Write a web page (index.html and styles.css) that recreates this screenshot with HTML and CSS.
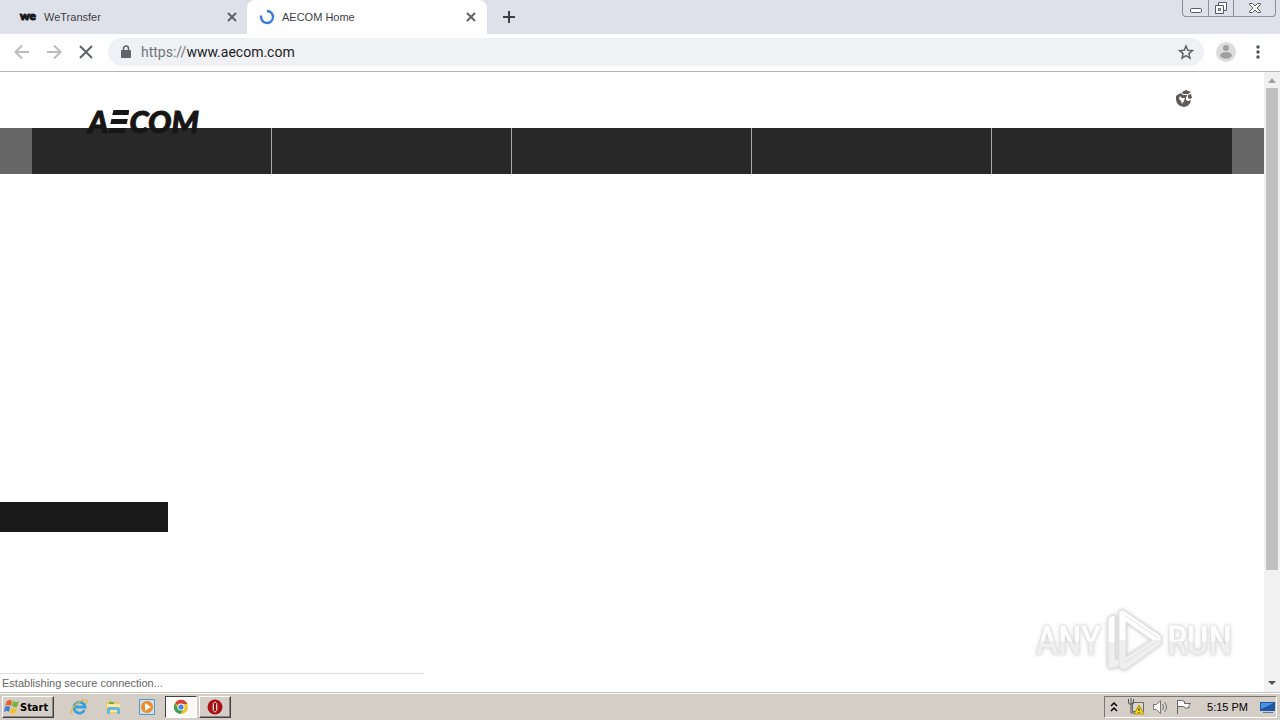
FILE: index.html
```html
<!DOCTYPE html>
<html lang="en">
<head>
<meta charset="utf-8">
<title>AECOM Home</title>
<link rel="stylesheet" href="styles.css">
</head>
<body>
<div class="tabstrip">
  <div class="tab">
    <span class="we" aria-hidden="true">we</span>
    <span class="tab-title">WeTransfer</span>
    <button class="icon-btn" aria-label="Close WeTransfer"><svg width="10" height="10" viewBox="0 0 10 10"><path d="M1 1l8 8M9 1l-8 8" stroke="#5f6368" stroke-width="2"/></svg></button>
  </div>
  <div class="tab active">
    <svg class="spinner" width="16" height="16" viewBox="0 0 16 16"><path d="M8 2a6 6 0 1 1-5.8 4.500" fill="none" stroke="#3b7ddd" stroke-width="2.400"/></svg>
    <span class="tab-title">AECOM Home</span>
    <button class="icon-btn" aria-label="Close AECOM Home"><svg width="10" height="10" viewBox="0 0 10 10"><path d="M1 1l8 8M9 1l-8 8" stroke="#5f6368" stroke-width="2"/></svg></button>
  </div>
  <button class="icon-btn new-tab" aria-label="New tab"><svg width="12" height="12" viewBox="0 0 12 12"><path d="M6 0v12M0 6h12" stroke="#3c4043" stroke-width="2"/></svg></button>
  <div class="window-controls">
    <button class="win" aria-label="Minimize"><svg width="24" height="16" viewBox="0 0 24 16"><rect x="6.500" y="8.500" width="11" height="4" rx="1" fill="#fff" stroke="#555b66"/></svg></button>
    <button class="win" aria-label="Restore"><svg width="24" height="16" viewBox="0 0 24 16"><path d="M9.500 2.500h8v8h-8z" fill="#fff" stroke="#555b66"/><path d="M6.500 5.500h8v8h-8z" fill="#fff" stroke="#555b66"/><path d="M9.500 8.500h2v2h-2z" fill="none" stroke="#555b66"/></svg></button>
    <button class="win wide" aria-label="Close"><svg width="24" height="16" viewBox="0 0 24 16"><path d="M6.500 3.500h3l2.500 2.500 2.500-2.500h3v1l-3.500 3.500 3.500 3.500v1h-3L12 10l-2.500 2.500h-3v-1L10 8 6.500 4.500z" fill="#fff" stroke="#555b66"/></svg></button>
  </div>
</div>
<div class="toolbar">
  <button class="icon-btn" aria-label="Back"><svg width="16" height="16" viewBox="0 0 16 16"><path d="M15 8H2M8 1.500L1.500 8 8 14.500" fill="none" stroke="#b8babd" stroke-width="2"/></svg></button>
  <button class="icon-btn" aria-label="Forward"><svg width="16" height="16" viewBox="0 0 16 16"><path d="M1 8h13M8 1.500L14.500 8 8 14.500" fill="none" stroke="#b8babd" stroke-width="2"/></svg></button>
  <button class="icon-btn" aria-label="Stop"><svg width="16" height="16" viewBox="0 0 16 16"><path d="M2 2l12 12M14 2L2 14" stroke="#5f6368" stroke-width="2"/></svg></button>
  <div class="omnibox">
    <svg width="10" height="14" viewBox="0 0 10 14"><path d="M1 5h8q1 0 1 1v6q0 1-1 1H1q-1 0-1-1V6q0-1 1-1z" fill="#5f6368"/><path d="M2.500 6V3.500a2.500 2.500 0 0 1 5 0V6" fill="none" stroke="#5f6368" stroke-width="1.500"/></svg>
    <a class="url" href="#"><span class="scheme">https://</span>www.aecom.com</a>
    <button class="icon-btn" aria-label="Bookmark"><svg width="16" height="16" viewBox="0 0 16 16"><path d="M8 2l1.800 4.200 4.600.4-3.500 3 1.100 4.500L8 11.700l-4 2.400 1.100-4.500-3.500-3 4.600-.4z" fill="none" stroke="#5f6368" stroke-width="1.500"/></svg></button>
  </div>
  <button class="icon-btn profile" aria-label="Profile"><svg width="20" height="20" viewBox="0 0 20 20"><circle cx="10" cy="10" r="10" fill="#dcdcdc"/><circle cx="10" cy="6" r="3" fill="#a0a0a0"/><path d="M4 13c1-4 11-4 12 0-1 5-11 5-12 0z" fill="#a0a0a0"/></svg></button>
  <button class="icon-btn" aria-label="Menu"><svg width="16" height="16" viewBox="0 0 16 16"><g fill="#4f5357"><circle cx="8" cy="3" r="1.700"/><circle cx="8" cy="8" r="1.700"/><circle cx="8" cy="13" r="1.700"/></g></svg></button>
</div>
<div class="viewport">
  <main class="page">
    <header class="site-header">
      <a class="logo" href="#">A<span class="bars">E</span>COM</a>
      <a class="globe" href="#" aria-label="Choose region"><svg width="16" height="18" viewBox="0 0 16 18"><path d="M1 6l4-2 2 2h4l-1 4 2 2 3-1q-1 6-7 7-7-1-8-7-1-3 1-5z" fill="#625b55"/><path d="M6 3l4-2 5 2-3 2-5 0zM12 6l3-1 1 4-2 1-2-1z" fill="#625b55"/><path d="M4 7l2 2 3 0-1 3-2 3-1-3-2-2zM10 8l2 1 0 3-2-1z" fill="#fff"/></svg></a>
    </header>
    <nav class="site-nav" aria-label="Main"><div></div><div></div><div></div><div></div><div></div></nav>
    <div class="hero"></div>
    <div class="caption"></div>
  </main>
  <div class="scrollbar" aria-hidden="true">
    <svg width="16" height="16" viewBox="0 0 16 16"><path d="M4 11h8L8 6z" fill="#a3a3a3"/></svg>
    <div class="track"><div class="thumb"></div></div>
    <svg width="16" height="16" viewBox="0 0 16 16"><path d="M4 5h8L8 9z" fill="#505050"/></svg>
  </div>
  <div class="status">Establishing secure connection...</div>
  <div class="watermark">
    <span>ANY</span>
    <svg width="58" height="64" viewBox="0 0 58 64"><defs><linearGradient id="fade" x1="0" y1="0" x2="0" y2="1"><stop offset=".5" stop-color="#fff"/><stop offset=".5" stop-color="#efefef"/></linearGradient></defs><g fill="none" stroke="#e2e2e2" stroke-width="1" stroke-linejoin="round"><path d="M3 12q0-5 7-6v45l7-3v8l-12 4-2-3z" fill="url(#fade)"/><path fill="url(#fade)" fill-rule="evenodd" d="M14 2l4-1 38 26v8L20 61l-5-2-1-6zM21 13v35l26-17z"/><path d="M21 7l32 22M19 54l34-22"/></g></svg>
    <span>RUN</span>
  </div>
</div>
<footer class="taskbar">
  <button class="start"><svg width="16" height="16" viewBox="0 0 16 16"><path d="M3 2q3-2 5 0L7 7Q4 5 1 7z" fill="#e8622c"/><path d="M9 2q3 2 6 0l-2 6q-3 1-5-1z" fill="#76b43a"/><path d="M1 8q3-2 5 0l-1 5q-2-2-5 0z" fill="#3b83d2"/><path d="M7 9q3 2 6 0l-2 5q-3 2-5 0z" fill="#f5bd24"/></svg>Start</button>
  <button class="task first" aria-label="Internet Explorer"><svg width="18" height="18" viewBox="0 0 18 18"><path d="M14.500 12A5.500 5.500 0 1 1 15 9H5" fill="none" stroke="#36a0dc" stroke-width="2.800"/><path d="M2 16C-2 12 10 1 16 2q2 1 0 4" fill="none" stroke="#e9b93c" stroke-width="1.300"/></svg></button>
  <button class="task" aria-label="Explorer"><svg width="18" height="18" viewBox="0 0 18 18"><path d="M2 4l5-2 2 2h6v11H2z" fill="#eec968"/><path d="M3 6h13v8H3z" fill="#fbe69d"/><path d="M3 16v-5q0-2 2-2h9q2 0 2 2v5h-3v-4H6v4z" fill="#68b7df"/><path d="M5 5h5" stroke="#60ad58" stroke-width="2"/></svg></button>
  <button class="task" aria-label="Media Player"><svg width="18" height="18" viewBox="0 0 18 18"><path d="M1.500 1.500h15v15h-15z" fill="#c7e1f3" stroke="#5799c6"/><circle cx="9" cy="9" r="6" fill="#f18a20"/><path d="M7 5l6 4-6 4z" fill="#fff"/></svg></button>
  <button class="task pressed" aria-label="Chrome"><svg width="16" height="16" viewBox="0 0 16 16"><circle cx="8" cy="8" r="7" fill="#edc52e"/><path d="M8 8L2 4.300A7 7 0 0 1 14.500 5H8z" fill="#d84434"/><path d="M2 4.300A7 7 0 0 0 7.500 15L11 9 5 9z" fill="#3f9d58"/><circle cx="8" cy="8" r="3.500" fill="#fff"/><circle cx="8" cy="8" r="2.600" fill="#4181e6"/></svg></button>
  <button class="task raised" aria-label="Opera"><svg width="18" height="18" viewBox="0 0 18 18"><circle cx="9" cy="9" r="7.500" fill="#a90f16"/><ellipse cx="9" cy="9" rx="2.800" ry="5.500" fill="#e1dcd6" stroke="#cf3030"/><path d="M9 5v8" stroke="#8d1517" stroke-width="2"/></svg></button>
  <div class="tray">
    <svg class="chevrons" width="8" height="12" viewBox="0 0 8 12"><path d="M1 5l3-3 3 3M1 10l3-3 3 3" fill="none" stroke="#000" stroke-width="1.500"/></svg>
    <svg width="18" height="18" viewBox="0 0 18 18"><path d="M5.500 4.500h11v9h-11z" fill="#d8d8d0" stroke="#666"/><path d="M1.500 1v4q0 1 1 1h3q1 0 1-1V1M4 0v6M4 6v9h4" fill="none" stroke="#555"/><path d="M12 7l5 9H7z" fill="#f6d517" stroke="#ad9411"/><path d="M12 10v3M12 14v1" stroke="#222"/></svg>
    <svg width="18" height="18" viewBox="0 0 18 18"><path d="M2.500 6.500h3l4-4v13l-4-4h-3z" fill="#fff" stroke="#777"/><path d="M11.500 6q2 3 0 6M13.500 4q4 5 0 10" fill="none" stroke="#777"/></svg>
    <svg width="18" height="18" viewBox="0 0 18 18"><path d="M2.500 2v14M2.500 2.500q4-1 7 1v2h6l-2 3 1 1q-4 2-6-1H2.500" fill="#fff" stroke="#666"/></svg>
    <span class="clock">5:15 PM</span>
    <svg width="16" height="16" viewBox="0 0 16 16"><path d="M1 3h15v9H1z" fill="#1c58a5"/><path d="M2 4h13L2 10z" fill="#4d92dc"/><path d="M4 13h10v1H4z" fill="#60748b"/></svg>
  </div>
</footer>
</body>
</html>
```
FILE: styles.css
```css
* { box-sizing: border-box; }
body {
  margin: 0;
  height: 100vh;
  display: flex;
  flex-direction: column;
  overflow: hidden;
  background: #fff;
  color: #222;
  font-family: "Liberation Sans", Arial, sans-serif;
  font-size: 11px;
}
button { border: 0; padding: 0; background: none; font: inherit; color: inherit; }
a { color: inherit; text-decoration: none; }
svg { display: block; flex: none; }

.tabstrip { display: flex; flex: none; height: 34px; background: #dee1e9; }
.tab { display: flex; align-items: center; width: 247px; padding: 0 10px 0 20px; color: #3c4043; }
.tab.active {
  width: 240px;
  padding: 0 11px 0 12px;
  background: #fff;
  border-radius: 8px 8px 0 0;
}
.we {
  width: 24px;
  font-family: Lato, sans-serif;
  font-weight: 900;
  font-size: 12px;
  line-height: 12px;
  color: #17181c;
  padding-bottom: 3px;
  -webkit-text-stroke: 1px #17181c;
}
.tab-title { flex: 1; }
.active .tab-title { padding-left: 7px; }
.icon-btn { display: flex; align-items: center; justify-content: center; }
.new-tab { width: 44px; }
.window-controls {
  display: flex;
  height: 17px;
  margin: 0 4px 0 auto;
  border: 1px solid #8b909b;
  border-top: 0;
  border-radius: 0 0 4px 4px;
}
.win { display: flex; justify-content: center; width: 25px; }
.win + .win { border-left: 1px solid #8b909b; }
.win.wide { width: 42px; }

.toolbar {
  display: flex;
  flex: none;
  align-items: center;
  gap: 16px;
  height: 38px;
  padding: 0 14px 2px;
  border-bottom: 1px solid #b3b3b3;
}
.omnibox {
  display: flex;
  flex: 1;
  align-items: center;
  height: 28px;
  margin-left: -2px;
  padding: 0 10px 0 13px;
  border-radius: 14px;
  background: #eff1f4;
}
.url { flex: 1; padding-left: 10px; font-family: Roboto, sans-serif; font-size: 14px; color: #202124; }
.scheme { color: #70757a; }
.profile { margin-left: -4px; margin-right: -2px; }

.viewport { position: relative; display: flex; flex: 1; min-height: 0; }
.page { flex: 1; }
.site-header {
  display: flex;
  justify-content: space-between;
  align-items: flex-start;
  height: 56px;
  padding: 17px 72px 0 88px;
}
.logo {
  position: relative;
  z-index: 1;
  padding-top: 16px;
  font-family: Lato, sans-serif;
  font-weight: 900;
  font-style: italic;
  font-size: 31px;
  line-height: 32px;
  color: #171516;
  -webkit-text-stroke: 1px #171516;
}
.bars {
  display: inline-block;
  width: 21px;
  height: 23px;
  line-height: 23px;
  color: transparent;
  -webkit-text-stroke: 0;
  background: linear-gradient(#171516 5px, transparent 5px 9px, #171516 9px 14px, transparent 14px 18px, #171516 18px);
  clip-path: polygon(24% 0, 100% 0, 80% 100%, 0 100%);
}
.site-nav {
  display: grid;
  grid-template-columns: repeat(5, 1fr);
  height: 46px;
  padding: 0 32px;
  background: #666;
}
.site-nav div { background: #282828; }
.site-nav div:not(:last-child) { border-right: 1px solid #aaa; }
.hero { height: 328px; }
.caption { width: 168px; height: 30px; background: #191919; }

.scrollbar { display: flex; flex-direction: column; width: 16px; background: #f1f1f1; }
.track { flex: 1; padding: 0 2px; }
.thumb { height: 82%; background: #c1c1c1; }
.status {
  position: absolute;
  left: 0;
  bottom: 0;
  width: 424px;
  height: 19px;
  padding-left: 2px;
  border-top: 1px solid #dedede;
  background: #fff;
  line-height: 18px;
  color: #666;
}
.watermark {
  position: absolute;
  right: 48px;
  bottom: 19px;
  display: flex;
  align-items: center;
  gap: 4px;
  font-family: "Liberation Sans Narrow", "Roboto Condensed", "Liberation Sans", sans-serif;
  font-size: 38px;
  line-height: 64px;
  filter: drop-shadow(0 0 1px #ccc) drop-shadow(0 0 2px #ddd);
}
.watermark span {
  color: transparent;
  background: linear-gradient(#fff 50%, #efefef 50%);
  background-clip: text;
  -webkit-background-clip: text;
  -webkit-text-stroke: 1px transparent;
}

.taskbar {
  display: flex;
  flex: none;
  align-items: center;
  height: 28px;
  padding: 1px 3px 0 2px;
  border-top: 1px solid #c8c5bd;
  box-shadow: inset 0 1px #fff;
  background: #d5cec6;
  color: #000;
}
.start, .raised { border: 1px solid; border-color: #fff #404040 #404040 #fff; box-shadow: inset -1px -1px #888; }
.start {
  display: flex;
  align-items: center;
  width: 52px;
  height: 22px;
  padding-left: 1px;
  font-family: "DejaVu Sans Condensed", "DejaVu Sans", sans-serif;
  font-weight: bold;
}
.task { display: flex; align-items: center; justify-content: center; width: 34px; height: 22px; }
.first { margin-left: 8px; }
.pressed { width: 32px; margin-left: 1px; border: 1px solid; border-color: #404040 #fff #fff #404040; background: #fbfaf9; }
.raised { width: 32px; margin-left: 2px; }
.tray {
  display: flex;
  align-items: center;
  gap: 6px;
  height: 22px;
  margin-left: auto;
  padding: 0 1px 0 5px;
  border: 1px solid;
  border-color: #777 #fff #fff #777;
}
.chevrons { margin-right: 3px; }
.clock { padding: 0 5px 0 8px; }
```
